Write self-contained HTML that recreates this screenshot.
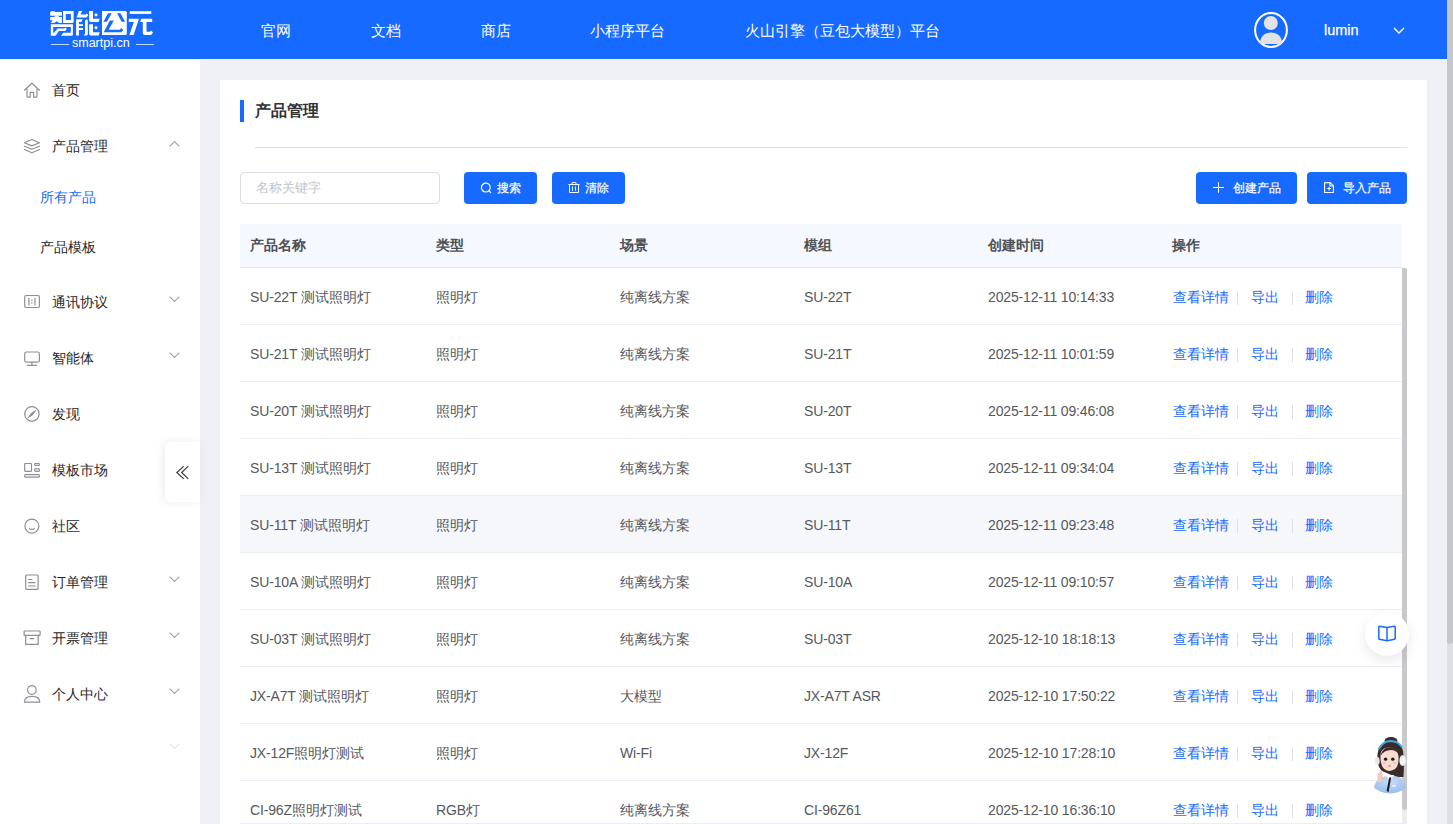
<!DOCTYPE html>
<html><head><meta charset="utf-8">
<style>
*{box-sizing:border-box;margin:0;padding:0}
html,body{width:1453px;height:824px;overflow:hidden;background:#fff;font-family:"Liberation Sans",sans-serif;}
.abs{position:absolute}
#hdr{position:absolute;left:0;top:0;width:1447px;height:59px;background:#176aff;color:#fff}
.nav{position:absolute;top:1px;height:59px;line-height:59px;font-size:15px;white-space:nowrap}
#psb{position:absolute;left:1447px;top:0;width:6px;height:824px;background:#dedfe3}
#psb i{position:absolute;left:0;top:0;width:6px;height:644px;background:#c6c7cb;border-radius:0 0 3px 3px}
#side{position:absolute;left:0;top:60px;width:200px;height:764px;background:#fff}
.mi{position:absolute;left:52px;font-size:14px;color:#262729;height:20px;line-height:20px;white-space:nowrap}
.ic{position:absolute;left:22px;width:20px;height:20px}
.chev{position:absolute;left:168px;width:12px;height:8px}
#main{position:absolute;left:200px;top:60px;width:1247px;height:764px;background:#eef0f5}
#card{position:absolute;left:220px;top:80px;width:1207px;height:744px;background:#fff}
.btn{position:absolute;top:172px;height:32px;background:#176aff;border-radius:4px;color:#fff;font-size:12px}
.bt{position:absolute;top:172px;height:32px;line-height:32px;font-size:12px;color:#fff;-webkit-text-stroke:0.2px #fff}
.th{position:absolute;top:224px;height:43px;line-height:43px;font-size:14px;font-weight:bold;color:#4d5057}
.row{position:absolute;left:240px;width:1162px;height:57px;border-bottom:1px solid #ebeef5}
.c{position:absolute;top:1px;height:56px;line-height:56px;font-size:14px;color:#55585e;white-space:nowrap}
.l{font-size:14px;letter-spacing:-0.15px}
.act{position:absolute;top:1px;height:56px;line-height:56px;font-size:14px;color:#176aff;white-space:nowrap}
.sep{position:absolute;top:23px;width:1px;height:14px;background:#dcdfe6}
</style></head><body>

<div id="hdr">
  <svg class="abs" style="left:0;top:0" width="160" height="40" viewBox="0 0 160 40" fill="#fff">
<path d="M51.2 11.2H55.1L54.6 12.1H61.9V15.8H50.2V12.1Z"/>
<path d="M54.7 15.6H58.8V17H54.7Z"/>
<path d="M50.2 16.9H61.9V23H59.3L56.6 21.2L54.4 23H50.8L52.6 20.3H50.2Z"/>
<path d="M63 11H73.6V21.5Q73.6 23 72.1 23H63ZM65.8 14V20.1H70.9V14Z" fill-rule="evenodd"/>
<path d="M50.8 24.2H72.9V34.2Q72.9 35.7 71.4 35.7H61.2L63.2 32.7H70.8V27.1H53.2V32.7H54.4L52.6 35.7H50.8Z" fill-rule="evenodd"/>
<path d="M53.6 33.2L57.6 28.6H64.2L65.6 27.6L66.8 29.2L65.2 31H58.9L55.6 35.7H52.6Z"/>
<path d="M78.9 11H82.3L80.4 14.6H85.8L87 13.6L88.3 15.2L86.5 17.4H76.6Z"/>
<path d="M89.1 11H93V18.8H99.7L98.6 22H91Q89.1 22 89.1 20Z"/>
<path d="M96 13L97.9 14.9L96 16.8L94.1 14.9Z"/>
<path d="M76.1 19.2H82.8L81.2 22H78.9V24.2H83V26H78.9V28H83V30H78.9V35.5H76.1Z"/>
<path d="M85 20.4L86.6 19.2Q87.8 19.5 87.8 21V34Q87.8 35.5 86.3 35.5H83.8L85 33.5Z"/>
<path d="M89.1 24.2H93V32.2H99.7L98.6 35.5H91Q89.1 35.5 89.1 33.5Z"/>
<path d="M96 25.8L97.9 27.7L96 29.6L94.1 27.7Z"/>
<path d="M102 11H125.3Q126.8 11 126.8 12.5V33.6Q126.8 35.1 125.3 35.1H102Z"/>
<path d="M108 13.2H111.7L106.9 21.8H103.5Z" fill="#176aff"/>
<path d="M117.1 13.2H120.4L125.1 21.8H121.6Z" fill="#176aff"/>
<path d="M109.9 20.5H113.8L108.7 29.7H119.7L121.4 28L123.2 30.2L121.2 32.2H103.7Z" fill="#176aff"/>
<path d="M129.7 11.2H151.3V13.9H129.7Z"/>
<path d="M128.8 18.8H139L133.6 35H129.4L133.9 22.1H128.8Z"/>
<path d="M141.3 18.8H152.2V22.1H146.5V31.8H149.8L151.3 30.6L153 32.6L151 35.1H145Q142.8 35.1 142.8 33V22.1H140.1Z"/>
</svg>
  <div class="abs" style="left:51px;top:44px;width:18px;height:1px;background:rgba(255,255,255,0.75)"></div>
  <div class="abs" style="left:136px;top:44px;width:18px;height:1px;background:rgba(255,255,255,0.75)"></div>
  <div class="abs" style="left:72px;top:36px;font-size:12.5px;line-height:14px">smartpi.cn</div>
  <svg class="abs" style="left:1253px;top:11px" width="36" height="38" viewBox="0 0 36 38"><ellipse cx="18" cy="19" rx="15.9" ry="16.9" fill="none" stroke="#fff" stroke-width="2"/><circle cx="17.8" cy="12" r="7" fill="#e3e3e3"/><path d="M7 33C7 25 12 21.5 18 21.5C24 21.5 29 25 29 33Z" fill="#e3e3e3"/></svg>
  <div class="abs" style="left:1324px;top:20px;font-size:14.5px;line-height:20px;-webkit-text-stroke:0.25px #fff">lumin</div>
  <svg class="abs" style="left:1391.5px;top:25.5px" width="14" height="9" viewBox="0 0 14 9" fill="none" stroke="#fff" stroke-width="1.4"><path d="M2 2L7 7L12 2"/></svg>
  <div class="nav" style="left:261px">官网</div>
  <div class="nav" style="left:371px">文档</div>
  <div class="nav" style="left:481px">商店</div>
  <div class="nav" style="left:590px">小程序平台</div>
  <div class="nav" style="left:745px">火山引擎（豆包大模型）平台</div>
</div>
<div id="psb"><i></i></div>

<div id="side">
</div>
<div class="mi" style="top:80px">首页</div>
<div class="mi" style="top:136px">产品管理</div>
<div class="mi" style="top:187px;left:40px;color:#176aff">所有产品</div>
<div class="mi" style="top:237px;left:40px">产品模板</div>
<div class="mi" style="top:292px">通讯协议</div>
<div class="mi" style="top:348px">智能体</div>
<div class="mi" style="top:404px">发现</div>
<div class="mi" style="top:460px">模板市场</div>
<div class="mi" style="top:516px">社区</div>
<div class="mi" style="top:572px">订单管理</div>
<div class="mi" style="top:628px">开票管理</div>
<div class="mi" style="top:684px">个人中心</div>
<div id="main"></div>
<div class="abs" style="left:0;top:59px;width:1447px;height:1px;background:#f8f6f1"></div>
<div id="card"></div>
<div class="abs" style="left:240px;top:100px;width:4px;height:22px;background:#176aff"></div>
<div class="abs" style="left:255px;top:100px;height:22px;line-height:22px;font-size:16px;font-weight:bold;color:#303133">产品管理</div>
<div class="abs" style="left:255px;top:147px;width:1152px;height:1px;background:#dcdfe6"></div>
<div class="abs" style="left:240px;top:172px;width:200px;height:32px;border:1px solid #dcdfe6;border-radius:4px;background:#fff"></div>
<div class="abs" style="left:256px;top:172px;height:32px;line-height:32px;font-size:13px;color:#c0c4cc">名称关键字</div>
<div class="btn" style="left:464px;width:73px"></div>
<svg class="abs" style="left:480px;top:182px" width="12" height="12" viewBox="0 0 12 12" fill="none" stroke="#fff" stroke-width="1.2" stroke-linecap="round"><circle cx="5.8" cy="5.6" r="4.4"/><path d="M9 8.9L10.8 10.7"/></svg>
<div class="bt" style="left:497px">搜索</div>
<div class="btn" style="left:552px;width:73px"></div>
<svg class="abs" style="left:568px;top:181px" width="12" height="13" viewBox="0 0 12 13" fill="none" stroke="#fff" stroke-width="1"><path d="M0.5 3.5H11.5"/><path d="M4 3.2V2Q4 1.5 4.5 1.5H7.5Q8 1.5 8 2V3.2"/><path d="M1.5 3.5V11.5H10.5V3.5"/><path d="M4.5 5.5V9.8M7.5 5.5V9.8"/></svg>
<div class="bt" style="left:585px">清除</div>
<div class="btn" style="left:1196px;width:101px"></div>
<svg class="abs" style="left:1212px;top:181px" width="13" height="13" viewBox="0 0 13 13" fill="none" stroke="#fff" stroke-width="1"><path d="M6.5 1.2V11.8M1 6.5H12"/></svg>
<div class="bt" style="left:1233px">创建产品</div>
<div class="btn" style="left:1307px;width:100px"></div>
<svg class="abs" style="left:1323px;top:181px" width="12" height="13" viewBox="0 0 12 13" fill="none" stroke="#fff" stroke-width="1.1" stroke-linejoin="round"><path d="M1.6 1.6H7.2L10.4 4.8V11.5H1.6Z"/><path d="M6.9 1.6V5H10.4"/><path d="M4.3 7.5H7.9M6.1 5.9V9.5"/></svg>
<div class="bt" style="left:1343px">导入产品</div>
<div class="abs" style="left:240px;top:224px;width:1162px;height:44px;background:#f5f8fe;border-bottom:1px solid #e4e7ed"></div>
<div class="th" style="left:250px">产品名称</div>
<div class="th" style="left:436px">类型</div>
<div class="th" style="left:620px">场景</div>
<div class="th" style="left:804px">模组</div>
<div class="th" style="left:988px">创建时间</div>
<div class="th" style="left:1172px">操作</div>
<div class="row" style="top:268px;"><div class="c" style="left:10px"><span class="l">SU-22T </span>测试照明灯</div><div class="c" style="left:196px">照明灯</div><div class="c" style="left:380px">纯离线方案</div><div class="c" style="left:564px"><span class="l">SU-22T</span></div><div class="c" style="left:748px"><span class="l">2025-12-11 10:14:33</span></div><div class="act" style="left:933px">查看详情</div><div class="sep" style="left:997px"></div><div class="act" style="left:1011px">导出</div><div class="sep" style="left:1052px"></div><div class="act" style="left:1065px">删除</div></div>
<div class="row" style="top:325px;"><div class="c" style="left:10px"><span class="l">SU-21T </span>测试照明灯</div><div class="c" style="left:196px">照明灯</div><div class="c" style="left:380px">纯离线方案</div><div class="c" style="left:564px"><span class="l">SU-21T</span></div><div class="c" style="left:748px"><span class="l">2025-12-11 10:01:59</span></div><div class="act" style="left:933px">查看详情</div><div class="sep" style="left:997px"></div><div class="act" style="left:1011px">导出</div><div class="sep" style="left:1052px"></div><div class="act" style="left:1065px">删除</div></div>
<div class="row" style="top:382px;"><div class="c" style="left:10px"><span class="l">SU-20T </span>测试照明灯</div><div class="c" style="left:196px">照明灯</div><div class="c" style="left:380px">纯离线方案</div><div class="c" style="left:564px"><span class="l">SU-20T</span></div><div class="c" style="left:748px"><span class="l">2025-12-11 09:46:08</span></div><div class="act" style="left:933px">查看详情</div><div class="sep" style="left:997px"></div><div class="act" style="left:1011px">导出</div><div class="sep" style="left:1052px"></div><div class="act" style="left:1065px">删除</div></div>
<div class="row" style="top:439px;"><div class="c" style="left:10px"><span class="l">SU-13T </span>测试照明灯</div><div class="c" style="left:196px">照明灯</div><div class="c" style="left:380px">纯离线方案</div><div class="c" style="left:564px"><span class="l">SU-13T</span></div><div class="c" style="left:748px"><span class="l">2025-12-11 09:34:04</span></div><div class="act" style="left:933px">查看详情</div><div class="sep" style="left:997px"></div><div class="act" style="left:1011px">导出</div><div class="sep" style="left:1052px"></div><div class="act" style="left:1065px">删除</div></div>
<div class="row" style="top:496px;background:#f5f7fa;"><div class="c" style="left:10px"><span class="l">SU-11T </span>测试照明灯</div><div class="c" style="left:196px">照明灯</div><div class="c" style="left:380px">纯离线方案</div><div class="c" style="left:564px"><span class="l">SU-11T</span></div><div class="c" style="left:748px"><span class="l">2025-12-11 09:23:48</span></div><div class="act" style="left:933px">查看详情</div><div class="sep" style="left:997px"></div><div class="act" style="left:1011px">导出</div><div class="sep" style="left:1052px"></div><div class="act" style="left:1065px">删除</div></div>
<div class="row" style="top:553px;"><div class="c" style="left:10px"><span class="l">SU-10A </span>测试照明灯</div><div class="c" style="left:196px">照明灯</div><div class="c" style="left:380px">纯离线方案</div><div class="c" style="left:564px"><span class="l">SU-10A</span></div><div class="c" style="left:748px"><span class="l">2025-12-11 09:10:57</span></div><div class="act" style="left:933px">查看详情</div><div class="sep" style="left:997px"></div><div class="act" style="left:1011px">导出</div><div class="sep" style="left:1052px"></div><div class="act" style="left:1065px">删除</div></div>
<div class="row" style="top:610px;"><div class="c" style="left:10px"><span class="l">SU-03T </span>测试照明灯</div><div class="c" style="left:196px">照明灯</div><div class="c" style="left:380px">纯离线方案</div><div class="c" style="left:564px"><span class="l">SU-03T</span></div><div class="c" style="left:748px"><span class="l">2025-12-10 18:18:13</span></div><div class="act" style="left:933px">查看详情</div><div class="sep" style="left:997px"></div><div class="act" style="left:1011px">导出</div><div class="sep" style="left:1052px"></div><div class="act" style="left:1065px">删除</div></div>
<div class="row" style="top:667px;"><div class="c" style="left:10px"><span class="l">JX-A7T </span>测试照明灯</div><div class="c" style="left:196px">照明灯</div><div class="c" style="left:380px">大模型</div><div class="c" style="left:564px"><span class="l">JX-A7T ASR</span></div><div class="c" style="left:748px"><span class="l">2025-12-10 17:50:22</span></div><div class="act" style="left:933px">查看详情</div><div class="sep" style="left:997px"></div><div class="act" style="left:1011px">导出</div><div class="sep" style="left:1052px"></div><div class="act" style="left:1065px">删除</div></div>
<div class="row" style="top:724px;"><div class="c" style="left:10px"><span class="l">JX-12F</span>照明灯测试</div><div class="c" style="left:196px">照明灯</div><div class="c" style="left:380px"><span class="l">Wi-Fi</span></div><div class="c" style="left:564px"><span class="l">JX-12F</span></div><div class="c" style="left:748px"><span class="l">2025-12-10 17:28:10</span></div><div class="act" style="left:933px">查看详情</div><div class="sep" style="left:997px"></div><div class="act" style="left:1011px">导出</div><div class="sep" style="left:1052px"></div><div class="act" style="left:1065px">删除</div></div>
<div class="row" style="top:781px;"><div class="c" style="left:10px"><span class="l">CI-96Z</span>照明灯测试</div><div class="c" style="left:196px"><span class="l">RGB</span>灯</div><div class="c" style="left:380px">纯离线方案</div><div class="c" style="left:564px"><span class="l">CI-96Z61</span></div><div class="c" style="left:748px"><span class="l">2025-12-10 16:36:10</span></div><div class="act" style="left:933px">查看详情</div><div class="sep" style="left:997px"></div><div class="act" style="left:1011px">导出</div><div class="sep" style="left:1052px"></div><div class="act" style="left:1065px">删除</div></div>
<svg class="abs" style="left:20px;top:78px" width="24" height="24" viewBox="0 0 24 24" fill="none" stroke="#8b8f98" stroke-width="1.2" stroke-linecap="round" stroke-linejoin="round"><path d="M4.4 12.2L11.9 5.2L19.5 12.2"/><path d="M7 11.2V18.2Q7 19.2 8 19.2H10.2V14.3H13.6V19.2H16Q17 19.2 17 18.2V11.2"/></svg>
<svg class="abs" style="left:20px;top:134px" width="24" height="24" viewBox="0 0 24 24" fill="none" stroke="#8b8f98" stroke-width="1.2" stroke-linecap="round" stroke-linejoin="round"><path d="M4.4 8.7L11.9 5.5L19.5 8.7L11.9 11.9Z"/><path d="M4.4 12.2L11.9 15.2L19.5 12.2"/><path d="M4.4 15.5L11.9 18.8L19.5 15.5"/></svg>
<svg class="abs" style="left:20px;top:290px" width="24" height="24" viewBox="0 0 24 24" fill="none" stroke="#8b8f98" stroke-width="1.2" stroke-linecap="round" stroke-linejoin="round"><rect x="4.7" y="5.5" width="14.7" height="12" rx="1.6"/><path d="M8.9 8.4V14.9M15 8.4V14.9"/><circle cx="11.9" cy="10.3" r="0.75" fill="#8b8f98" stroke="none"/><circle cx="11.9" cy="12.9" r="0.75" fill="#8b8f98" stroke="none"/></svg>
<svg class="abs" style="left:20px;top:346px" width="24" height="24" viewBox="0 0 24 24" fill="none" stroke="#8b8f98" stroke-width="1.2" stroke-linecap="round" stroke-linejoin="round"><rect x="4.7" y="6" width="14.7" height="10.2" rx="1.8"/><path d="M11.9 16.4V19.2M7.4 19.4H16.6"/></svg>
<svg class="abs" style="left:20px;top:402px" width="24" height="24" viewBox="0 0 24 24" fill="none" stroke="#8b8f98" stroke-width="1.2" stroke-linecap="round" stroke-linejoin="round"><circle cx="11.9" cy="11.9" r="7.2"/><path d="M8.3 15.6Q10.5 10.6 15.7 8.4Q13.5 13.4 8.3 15.6Z" fill="#8b8f98" stroke-width="0.8"/></svg>
<svg class="abs" style="left:20px;top:458px" width="24" height="24" viewBox="0 0 24 24" fill="none" stroke="#8b8f98" stroke-width="1.2" stroke-linecap="round" stroke-linejoin="round"><rect x="4.7" y="5.5" width="6.8" height="7.9" rx="0.8"/><rect x="14.6" y="5.5" width="4.8" height="1.9" rx="0.8"/><rect x="14.6" y="10.8" width="4.8" height="2.5" rx="0.8"/><rect x="4.7" y="16.6" width="14.7" height="2.6" rx="0.9"/></svg>
<svg class="abs" style="left:20px;top:514px" width="24" height="24" viewBox="0 0 24 24" fill="none" stroke="#8b8f98" stroke-width="1.2" stroke-linecap="round" stroke-linejoin="round"><circle cx="11.9" cy="12.1" r="7.0"/><path d="M9.6 14.3Q9.8 15.4 11.9 15.4Q14 15.4 14.3 14.3"/></svg>
<svg class="abs" style="left:20px;top:570px" width="24" height="24" viewBox="0 0 24 24" fill="none" stroke="#8b8f98" stroke-width="1.2" stroke-linecap="round" stroke-linejoin="round"><rect x="5.7" y="5" width="12.4" height="14.4" rx="0.8"/><path d="M8.6 9.5H11.9M8.6 12.7H15.1M8.6 16H15.1"/></svg>
<svg class="abs" style="left:20px;top:626px" width="24" height="24" viewBox="0 0 24 24" fill="none" stroke="#8b8f98" stroke-width="1.2" stroke-linecap="round" stroke-linejoin="round"><rect x="4.1" y="5" width="16" height="4.3" rx="0.6"/><path d="M5.7 9.3V18.4H18.2V9.3"/><path d="M10 12.7H13.7"/></svg>
<svg class="abs" style="left:20px;top:682px" width="24" height="24" viewBox="0 0 24 24" fill="none" stroke="#8b8f98" stroke-width="1.2" stroke-linecap="round" stroke-linejoin="round"><circle cx="11.9" cy="8" r="4.3"/><path d="M4.4 20.2C4.4 16.4 7.6 14.4 12 14.4C16.4 14.4 19.8 16.4 19.8 20.2Z"/></svg>
<svg class="abs" style="left:168.5px;top:140.6px" width="11" height="6.5" viewBox="0 0 11 6.5" fill="none" stroke="#a3a6ad" stroke-width="1.15" stroke-linecap="round"><path d="M1 5L5.5 0.6L10 5"/></svg>
<svg class="abs" style="left:168.5px;top:295.6px" width="11" height="6.5" viewBox="0 0 11 6.5" fill="none" stroke="#a3a6ad" stroke-width="1.15" stroke-linecap="round"><path d="M1 1L5.5 5.4L10 1"/></svg>
<svg class="abs" style="left:168.5px;top:351.6px" width="11" height="6.5" viewBox="0 0 11 6.5" fill="none" stroke="#a3a6ad" stroke-width="1.15" stroke-linecap="round"><path d="M1 1L5.5 5.4L10 1"/></svg>
<svg class="abs" style="left:168.5px;top:575.6px" width="11" height="6.5" viewBox="0 0 11 6.5" fill="none" stroke="#a3a6ad" stroke-width="1.15" stroke-linecap="round"><path d="M1 1L5.5 5.4L10 1"/></svg>
<svg class="abs" style="left:168.5px;top:631.6px" width="11" height="6.5" viewBox="0 0 11 6.5" fill="none" stroke="#a3a6ad" stroke-width="1.15" stroke-linecap="round"><path d="M1 1L5.5 5.4L10 1"/></svg>
<svg class="abs" style="left:168.5px;top:687.6px" width="11" height="6.5" viewBox="0 0 11 6.5" fill="none" stroke="#a3a6ad" stroke-width="1.15" stroke-linecap="round"><path d="M1 1L5.5 5.4L10 1"/></svg>
<svg class="abs" style="left:168.5px;top:743.3px" width="11" height="6.5" viewBox="0 0 11 6.5" fill="none" stroke="#e4e5e8" stroke-width="1.15" stroke-linecap="round"><path d="M1 1L5.5 5.4L10 1"/></svg>
<div class="abs" style="left:165px;top:442px;width:35px;height:60px;background:#fff;border-radius:6px 0 0 6px;box-shadow:-2px 0 8px rgba(0,0,0,0.08)"></div>
<svg class="abs" style="left:174px;top:464px" width="16" height="17" viewBox="0 0 16 17" fill="none" stroke="#333" stroke-width="1.1"><path d="M9.8 2.2L2.8 8.5L9.8 14.8M14.3 2.2L7.6 8.5L14.3 14.8"/></svg>

<div class="abs" style="left:1402px;top:268px;width:5px;height:555px;background:#ededed"></div>
<div class="abs" style="left:240px;top:823px;width:1167px;height:1px;background:#ebeef5"></div>
<div class="abs" style="left:1402px;top:268px;width:5px;height:542px;background:#c9c9cb;border-radius:0 3px 3px 3px"></div>
<div class="abs" style="left:1365px;top:612px;width:44px;height:44px;border-radius:50%;background:#fff;box-shadow:0 5px 14px rgba(0,0,0,0.09)"></div>
<svg class="abs" style="left:1377px;top:624px" width="20" height="19" viewBox="0 0 20 19" fill="none" stroke="#176aff" stroke-width="1.5" stroke-linejoin="round"><path d="M1.8 3Q1.8 2.2 2.6 2.2L10 3.4L17.4 2.2Q18.2 2.2 18.2 3V14.6Q18.2 15.2 17.6 15.3L10 16.7L2.4 15.3Q1.8 15.2 1.8 14.6Z"/><path d="M10 3.4V16.7"/></svg>
<svg class="abs" style="left:1370px;top:735px" width="40" height="62" viewBox="0 0 40 62">
<defs><clipPath id="gc"><circle cx="20" cy="33" r="25.5"/><rect x="0" y="0" width="40" height="33"/></clipPath><radialGradient id="sh" cx="0.5" cy="0.3" r="0.8"><stop offset="0" stop-color="#c3dcfa"/><stop offset="1" stop-color="#8fb5e6"/></radialGradient></defs>
<g clip-path="url(#gc)">
<ellipse cx="21" cy="6" rx="6.5" ry="4" fill="#3a2b28"/>
<path d="M7.5 26Q6.5 14 12 9Q17 5 23 5.5Q31 7 33 16Q34.5 26 33.5 42L26 42L12 36Q8 32 7.5 26Z" fill="#3a2b28"/>
<path d="M2.6 60Q3.5 46 11 42.5Q20 39.5 29 42Q36.5 45 37.5 60Z" fill="url(#sh)"/>
<path d="M15.5 40.5L20 45L24.5 40Z" fill="#fbfbfb"/>
<path d="M19.2 42.5L21.2 42.5L18.6 57L16.6 56Z" fill="#1e1e1e"/>
<path d="M10.5 20Q11 12.5 19 12.5Q27.5 12.5 28.5 21Q29 31 25 34Q21.5 36 19 36Q14.5 35.5 12 31Q10.2 26 10.5 20Z" fill="#f7dcd0"/>
<path d="M10.3 21Q12 13 19.5 12.3Q26 12.5 28.8 19Q25.5 15 21 15Q14 15 10.3 21Z" fill="#3a2b28"/>
<path d="M8.6 14.2Q13 6.2 20.5 6Q28.5 6.2 32 12.4" fill="none" stroke="#41a6e3" stroke-width="1.8"/>
<ellipse cx="7.4" cy="26" rx="2.3" ry="4" fill="#e6e6ec"/>
<ellipse cx="32.6" cy="25.5" rx="3.2" ry="5.4" fill="#f3f3f6"/>
<path d="M7.5 47Q7 40 9 37Q11 35.5 12.5 37.5Q13 41 12.5 47Z" fill="#f2c9bb"/>
<ellipse cx="15.6" cy="24.2" rx="1.7" ry="1.6" fill="#261a17"/>
<ellipse cx="22.8" cy="24.2" rx="1.7" ry="1.6" fill="#261a17"/>
<ellipse cx="14" cy="28" rx="2" ry="1.2" fill="#f4b8b0" opacity="0.7"/>
<ellipse cx="24.5" cy="28" rx="2" ry="1.2" fill="#f4b8b0" opacity="0.7"/>
<ellipse cx="19.5" cy="31" rx="1.3" ry="0.7" fill="#de6e66"/>
<rect x="22" y="50" width="4" height="1.6" fill="#eef4ff"/>
</g>
</svg>
</body></html>
